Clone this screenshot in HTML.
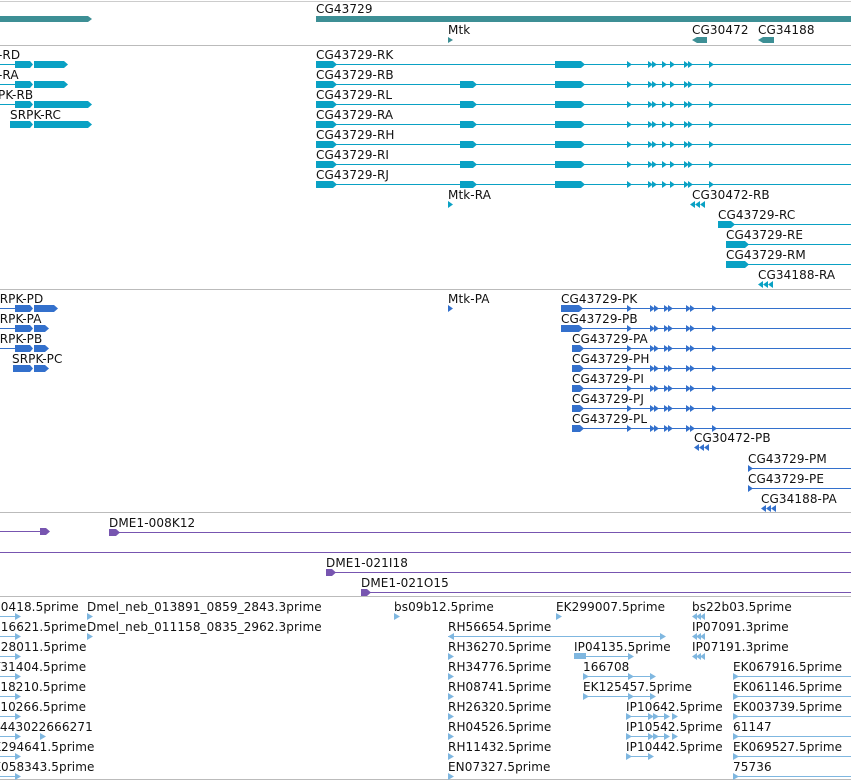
<!DOCTYPE html>
<html><head><meta charset="utf-8"><style>
html,body{margin:0;padding:0;background:#fff;}
body{width:851px;height:781px;position:relative;overflow:hidden;font-family:"DejaVu Sans","Liberation Sans",sans-serif;}
.t{position:absolute;font-size:12px;line-height:14px;color:#111;white-space:nowrap;letter-spacing:0.1px;margin-top:2px;}
svg{position:absolute;left:0;top:0;}
</style></head><body>
<svg width="851" height="781" viewBox="0 0 851 781">
<defs>
<g id="tr" fill="#0aa1c4">
<rect x="316" y="0" width="535" height="1"/>
<polygon points="316,-3 333,-3 337,0.5 333,4 316,4"/>
<polygon points="555,-3 581,-3 585,0.5 581,4 555,4"/>
<polygon points="627,-3 632,0.5 627,4"/><polygon points="648,-3 653,0.5 648,4"/><polygon points="652,-3 657,0.5 652,4"/>
<polygon points="662,-3 667,0.5 662,4"/><polygon points="670,-3 675,0.5 670,4"/><polygon points="684,-3 689,0.5 684,4"/><polygon points="688,-3 693,0.5 688,4"/>
<polygon points="709,-3 714,0.5 709,4"/>
</g>
<polygon id="ex2" fill="#0aa1c4" points="460,-3 473,-3 477,0.5 473,4 460,4"/>
<g id="pr" fill="#3370cc">
<rect x="572" y="0" width="279" height="1"/>
<polygon points="627,-3 632,0.5 627,4"/><polygon points="650,-3 655,0.5 650,4"/><polygon points="654,-3 659,0.5 654,4"/>
<polygon points="664,-3 669,0.5 664,4"/><polygon points="668,-3 673,0.5 668,4"/><polygon points="686,-3 691,0.5 686,4"/><polygon points="690,-3 695,0.5 690,4"/>
<polygon points="712,-3 717,0.5 712,4"/>
</g>
<g id="la" fill="#0aa1c4"><polygon points="0,0.5 5,-3 5,4"/><polygon points="5,0.5 10,-3 10,4"/><polygon points="10,0.5 15,-3 15,4"/></g>
<g id="lap" fill="#3370cc"><polygon points="0,0.5 5,-3 5,4"/><polygon points="5,0.5 10,-3 10,4"/><polygon points="10,0.5 15,-3 15,4"/></g>
<g id="lae" fill="#7fb7e0"><polygon points="0,0.5 5,-3 5,4"/><polygon points="4,0.5 9,-3 9,4"/><polygon points="8,0.5 13,-3 13,4"/></g>
<polygon id="et" fill="#7fb7e0" points="0,-3 6,0.5 0,4"/>
</defs>
<rect x="0" y="1" width="851" height="1" fill="#ccc"/>
<rect x="0" y="45" width="851" height="1" fill="#bbb"/>
<rect x="0" y="289" width="851" height="1" fill="#bbb"/>
<rect x="0" y="512" width="851" height="1" fill="#bbb"/>
<rect x="0" y="596" width="851" height="1" fill="#bbb"/>
<rect x="0" y="779" width="851" height="1" fill="#bbb"/>
<polygon fill="#3d8f95" points="0,16 88,16 92,19 88,22 0,22"/>
<rect x="316" y="16" width="535" height="6" fill="#3d8f95"/>
<polygon fill="#3d8f95" points="448,37 453,40 448,43"/>
<polygon fill="#3d8f95" points="692,40 697,37 707,37 707,43 697,43"/>
<polygon fill="#3d8f95" points="758,40 763,37 774,37 774,43 763,43"/>
<use href="#tr" y="64"/><use href="#tr" y="84"/><use href="#ex2" y="84"/>
<use href="#tr" y="104"/><use href="#ex2" y="104"/><use href="#tr" y="124"/><use href="#ex2" y="124"/>
<use href="#tr" y="144"/><use href="#ex2" y="144"/><use href="#tr" y="164"/><use href="#ex2" y="164"/>
<use href="#tr" y="184"/><use href="#ex2" y="184"/>
<g fill="#0aa1c4">
<rect x="0" y="64" width="15" height="1"/><rect x="0" y="84" width="15" height="1"/><rect x="0" y="104" width="15" height="1"/>
<polygon points="15,61 30,61 33,64.5 30,68 15,68"/><polygon points="34,61 64,61 68,64.5 64,68 34,68"/>
<polygon points="15,81 30,81 33,84.5 30,88 15,88"/><polygon points="34,81 64,81 68,84.5 64,88 34,88"/>
<polygon points="15,101 30,101 33,104.5 30,108 15,108"/><polygon points="34,101 88,101 92,104.5 88,108 34,108"/>
<polygon points="10,121 30,121 33,124.5 30,128 10,128"/><polygon points="34,121 88,121 92,124.5 88,128 34,128"/>
<polygon points="448,201 453,204.5 448,208"/>
<rect x="718" y="224" width="133" height="1"/><polygon points="718,221 731,221 735,224.5 731,228 718,228"/>
<rect x="726" y="244" width="125" height="1"/><polygon points="726,241 745,241 749,244.5 745,248 726,248"/>
<rect x="726" y="264" width="125" height="1"/><polygon points="726,261 745,261 749,264.5 745,268 726,268"/>
</g>
<use href="#la" x="690" y="204"/><use href="#la" x="758" y="284"/>
<g fill="#3370cc">
<rect x="0" y="308" width="15" height="1"/><rect x="0" y="328" width="15" height="1"/><rect x="0" y="348" width="15" height="1"/>
<polygon points="15,305 30,305 33,308.5 30,312 15,312"/><polygon points="34,305 54,305 58,308.5 54,312 34,312"/>
<polygon points="15,325 30,325 33,328.5 30,332 15,332"/><polygon points="34,325 45,325 49,328.5 45,332 34,332"/>
<polygon points="15,345 30,345 33,348.5 30,352 15,352"/><polygon points="34,345 45,345 49,348.5 45,352 34,352"/>
<polygon points="13,365 30,365 33,368.5 30,372 13,372"/><polygon points="34,365 45,365 49,368.5 45,372 34,372"/>
<polygon points="448,305 453,308.5 448,312"/>
<rect x="561" y="308" width="11" height="1"/><rect x="561" y="328" width="11" height="1"/>
<polygon points="561,305 579,305 583,308.5 579,312 561,312"/><polygon points="561,325 579,325 583,328.5 579,332 561,332"/>
<polygon points="572,345 580,345 584,348.5 580,352 572,352"/><polygon points="572,365 580,365 584,368.5 580,372 572,372"/>
<polygon points="572,385 580,385 584,388.5 580,392 572,392"/><polygon points="572,405 580,405 584,408.5 580,412 572,412"/>
<polygon points="572,425 580,425 584,428.5 580,432 572,432"/>
<rect x="748" y="468" width="103" height="1"/><polygon points="748,465 753,468.5 748,472"/>
<rect x="748" y="488" width="103" height="1"/><polygon points="748,485 753,488.5 748,492"/>
</g>
<use href="#pr" y="308"/><use href="#pr" y="328"/><use href="#pr" y="348"/><use href="#pr" y="368"/><use href="#pr" y="388"/><use href="#pr" y="408"/><use href="#pr" y="428"/>
<use href="#lap" x="694" y="447"/><use href="#lap" x="761" y="508"/>
<g fill="#7755b0">
<rect x="0" y="531" width="45" height="1"/><polygon points="40,528 46,528 50,531.5 46,535 40,535"/>
<rect x="109" y="532" width="742" height="1"/><polygon points="109,529 116,529 120,532.5 116,536 109,536"/>
<rect x="0" y="552" width="851" height="1"/>
<rect x="326" y="572" width="525" height="1"/><polygon points="326,569 332,569 336,572.5 332,576 326,576"/>
<rect x="361" y="592" width="490" height="1"/><polygon points="361,589 367,589 371,592.5 367,596 361,596"/>
</g>
<g fill="#7fb7e0">
<rect x="0" y="616" width="17" height="1"/><rect x="0" y="636" width="17" height="1"/><rect x="0" y="656" width="17" height="1"/>
<rect x="0" y="676" width="17" height="1"/><rect x="0" y="696" width="17" height="1"/><rect x="0" y="716" width="17" height="1"/>
<rect x="0" y="736" width="17" height="1"/><rect x="0" y="756" width="17" height="1"/><rect x="0" y="776" width="17" height="1"/>
<rect x="448" y="636" width="216" height="1"/><polygon points="448,636.5 454,633 454,640"/>
<rect x="574" y="656" width="58" height="1"/><rect x="574" y="653" width="12" height="6"/>
<rect x="583" y="676" width="70" height="1"/><rect x="583" y="696" width="70" height="1"/>
<rect x="626" y="716" width="42" height="1"/><rect x="626" y="736" width="42" height="1"/><rect x="626" y="756" width="24" height="1"/>
<rect x="733" y="676" width="118" height="1"/><rect x="733" y="696" width="118" height="1"/><rect x="733" y="716" width="118" height="1"/>
<rect x="733" y="736" width="118" height="1"/><rect x="733" y="756" width="118" height="1"/><rect x="733" y="776" width="118" height="1"/>
</g>
<use href="#et" x="15" y="616"/><use href="#et" x="15" y="636"/><use href="#et" x="15" y="656"/><use href="#et" x="15" y="676"/>
<use href="#et" x="15" y="696"/><use href="#et" x="15" y="716"/><use href="#et" x="15" y="736"/><use href="#et" x="40" y="736"/>
<use href="#et" x="15" y="756"/><use href="#et" x="15" y="776"/>
<use href="#et" x="87" y="616"/><use href="#et" x="87" y="636"/>
<use href="#et" x="394" y="616"/><use href="#et" x="556" y="616"/>
<use href="#lae" x="692" y="616"/><use href="#lae" x="692" y="636"/><use href="#lae" x="692" y="656"/>
<use href="#et" x="660" y="636"/>
<use href="#et" x="448" y="656"/><use href="#et" x="448" y="676"/><use href="#et" x="448" y="696"/><use href="#et" x="448" y="716"/>
<use href="#et" x="448" y="736"/><use href="#et" x="448" y="756"/><use href="#et" x="448" y="776"/>
<use href="#et" x="628" y="656"/>
<use href="#et" x="583" y="676"/><use href="#et" x="628" y="676"/><use href="#et" x="650" y="676"/>
<use href="#et" x="583" y="696"/><use href="#et" x="628" y="696"/><use href="#et" x="650" y="696"/>
<use href="#et" x="626" y="716"/><use href="#et" x="648" y="716"/><use href="#et" x="653" y="716"/><use href="#et" x="664" y="716"/><use href="#et" x="672" y="716"/>
<use href="#et" x="626" y="736"/><use href="#et" x="648" y="736"/><use href="#et" x="653" y="736"/><use href="#et" x="664" y="736"/><use href="#et" x="672" y="736"/>
<use href="#et" x="626" y="756"/><use href="#et" x="648" y="756"/>
<use href="#et" x="733" y="676"/><use href="#et" x="733" y="696"/><use href="#et" x="733" y="716"/><use href="#et" x="733" y="736"/><use href="#et" x="733" y="756"/><use href="#et" x="733" y="776"/>
</svg>

<div class="t" style="left:316px;top:0px">CG43729</div>
<div class="t" style="left:448px;top:21px">Mtk</div>
<div class="t" style="left:692px;top:21px">CG30472</div>
<div class="t" style="left:758px;top:21px">CG34188</div>

<div class="t" style="left:-2px;top:46px">-RD</div>
<div class="t" style="left:-2px;top:66px">-RA</div>
<div class="t" style="left:-2px;top:86px">PK-RB</div>
<div class="t" style="left:10px;top:106px">SRPK-RC</div>
<div class="t" style="left:316px;top:46px">CG43729-RK</div>
<div class="t" style="left:316px;top:66px">CG43729-RB</div>
<div class="t" style="left:316px;top:86px">CG43729-RL</div>
<div class="t" style="left:316px;top:106px">CG43729-RA</div>
<div class="t" style="left:316px;top:126px">CG43729-RH</div>
<div class="t" style="left:316px;top:146px">CG43729-RI</div>
<div class="t" style="left:316px;top:166px">CG43729-RJ</div>
<div class="t" style="left:448px;top:186px">Mtk-RA</div>
<div class="t" style="left:692px;top:186px">CG30472-RB</div>
<div class="t" style="left:718px;top:206px">CG43729-RC</div>
<div class="t" style="left:726px;top:226px">CG43729-RE</div>
<div class="t" style="left:726px;top:246px">CG43729-RM</div>
<div class="t" style="left:758px;top:266px">CG34188-RA</div>

<div class="t" style="left:-8px;top:290px">SRPK-PD</div>
<div class="t" style="left:-8px;top:310px">SRPK-PA</div>
<div class="t" style="left:-8px;top:330px">SRPK-PB</div>
<div class="t" style="left:12px;top:350px">SRPK-PC</div>
<div class="t" style="left:448px;top:290px">Mtk-PA</div>
<div class="t" style="left:561px;top:290px">CG43729-PK</div>
<div class="t" style="left:561px;top:310px">CG43729-PB</div>
<div class="t" style="left:572px;top:330px">CG43729-PA</div>
<div class="t" style="left:572px;top:350px">CG43729-PH</div>
<div class="t" style="left:572px;top:370px">CG43729-PI</div>
<div class="t" style="left:572px;top:390px">CG43729-PJ</div>
<div class="t" style="left:572px;top:410px">CG43729-PL</div>
<div class="t" style="left:694px;top:429px">CG30472-PB</div>
<div class="t" style="left:748px;top:450px">CG43729-PM</div>
<div class="t" style="left:748px;top:470px">CG43729-PE</div>
<div class="t" style="left:761px;top:490px">CG34188-PA</div>

<div class="t" style="left:109px;top:514px">DME1-008K12</div>
<div class="t" style="left:326px;top:554px">DME1-021I18</div>
<div class="t" style="left:361px;top:574px">DME1-021O15</div>

<div class="t" style="left:-7px;top:598px">10418.5prime</div>
<div class="t" style="left:87px;top:598px">Dmel_neb_013891_0859_2843.3prime</div>
<div class="t" style="left:-7px;top:618px">116621.5prime</div>
<div class="t" style="left:87px;top:618px">Dmel_neb_011158_0835_2962.3prime</div>
<div class="t" style="left:-7px;top:638px">128011.5prime</div>
<div class="t" style="left:-7px;top:658px">T31404.5prime</div>
<div class="t" style="left:-7px;top:678px">P18210.5prime</div>
<div class="t" style="left:-7px;top:698px">P10266.5prime</div>
<div class="t" style="left:0px;top:718px">443022666271</div>
<div class="t" style="left:-7px;top:738px">K294641.5prime</div>
<div class="t" style="left:-7px;top:758px">K058343.5prime</div>

<div class="t" style="left:394px;top:598px">bs09b12.5prime</div>
<div class="t" style="left:556px;top:598px">EK299007.5prime</div>
<div class="t" style="left:692px;top:598px">bs22b03.5prime</div>
<div class="t" style="left:448px;top:618px">RH56654.5prime</div>
<div class="t" style="left:692px;top:618px">IP07091.3prime</div>
<div class="t" style="left:448px;top:638px">RH36270.5prime</div>
<div class="t" style="left:574px;top:638px">IP04135.5prime</div>
<div class="t" style="left:692px;top:638px">IP07191.3prime</div>
<div class="t" style="left:448px;top:658px">RH34776.5prime</div>
<div class="t" style="left:583px;top:658px">166708</div>
<div class="t" style="left:733px;top:658px">EK067916.5prime</div>
<div class="t" style="left:448px;top:678px">RH08741.5prime</div>
<div class="t" style="left:583px;top:678px">EK125457.5prime</div>
<div class="t" style="left:733px;top:678px">EK061146.5prime</div>
<div class="t" style="left:448px;top:698px">RH26320.5prime</div>
<div class="t" style="left:626px;top:698px">IP10642.5prime</div>
<div class="t" style="left:733px;top:698px">EK003739.5prime</div>
<div class="t" style="left:448px;top:718px">RH04526.5prime</div>
<div class="t" style="left:626px;top:718px">IP10542.5prime</div>
<div class="t" style="left:733px;top:718px">61147</div>
<div class="t" style="left:448px;top:738px">RH11432.5prime</div>
<div class="t" style="left:626px;top:738px">IP10442.5prime</div>
<div class="t" style="left:733px;top:738px">EK069527.5prime</div>
<div class="t" style="left:448px;top:758px">EN07327.5prime</div>
<div class="t" style="left:733px;top:758px">75736</div>
</body></html>
